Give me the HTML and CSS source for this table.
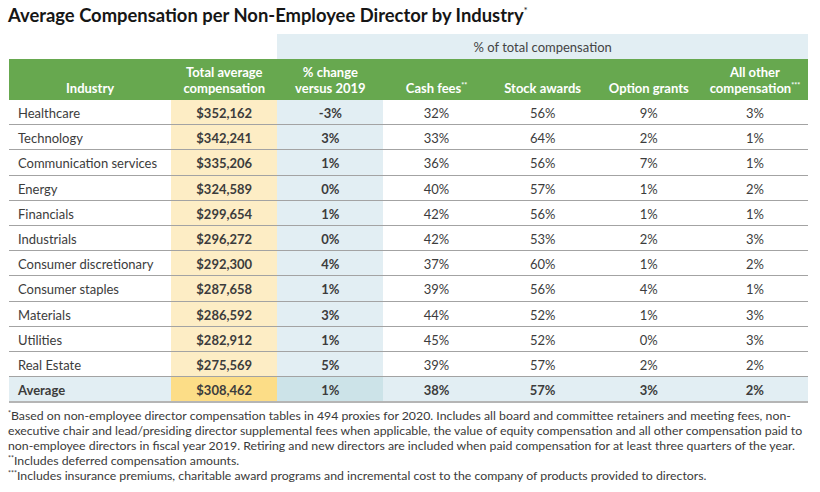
FILE: index.html
```html
<!DOCTYPE html>
<html>
<head>
<meta charset="utf-8">
<link rel="stylesheet" href="styles.css">
</head>
<body>
<h1 class="title">Average Compensation per Non-Employee Director by Industry<sup class="ast">*</sup></h1>
<table class="comp">
  <colgroup>
    <col class="c-ind"><col class="c-num"><col class="c-num"><col class="c-num"><col class="c-num"><col class="c-num"><col class="c-num">
  </colgroup>
  <thead>
    <tr class="band-row">
      <th colspan="2" class="blank"></th>
      <th colspan="5" class="band">% of total compensation</th>
    </tr>
    <tr class="head-row">
      <th>Industry</th>
      <th>Total average<br>compensation</th>
      <th>% change<br>versus 2019</th>
      <th>Cash fees<sup class="ast">**</sup></th>
      <th>Stock awards</th>
      <th>Option grants</th>
      <th>All other<br>compensation<sup class="ast">***</sup></th>
    </tr>
  </thead>
  <tbody>
    <tr><td class="ind">Healthcare</td><td class="tot">$352,162</td><td class="chg">-3%</td><td>32%</td><td>56%</td><td>9%</td><td>3%</td></tr>
    <tr><td class="ind">Technology</td><td class="tot">$342,241</td><td class="chg">3%</td><td>33%</td><td>64%</td><td>2%</td><td>1%</td></tr>
    <tr><td class="ind">Communication services</td><td class="tot">$335,206</td><td class="chg">1%</td><td>36%</td><td>56%</td><td>7%</td><td>1%</td></tr>
    <tr><td class="ind">Energy</td><td class="tot">$324,589</td><td class="chg">0%</td><td>40%</td><td>57%</td><td>1%</td><td>2%</td></tr>
    <tr><td class="ind">Financials</td><td class="tot">$299,654</td><td class="chg">1%</td><td>42%</td><td>56%</td><td>1%</td><td>1%</td></tr>
    <tr><td class="ind">Industrials</td><td class="tot">$296,272</td><td class="chg">0%</td><td>42%</td><td>53%</td><td>2%</td><td>3%</td></tr>
    <tr><td class="ind">Consumer discretionary</td><td class="tot">$292,300</td><td class="chg">4%</td><td>37%</td><td>60%</td><td>1%</td><td>2%</td></tr>
    <tr><td class="ind">Consumer staples</td><td class="tot">$287,658</td><td class="chg">1%</td><td>39%</td><td>56%</td><td>4%</td><td>1%</td></tr>
    <tr><td class="ind">Materials</td><td class="tot">$286,592</td><td class="chg">3%</td><td>44%</td><td>52%</td><td>1%</td><td>3%</td></tr>
    <tr><td class="ind">Utilities</td><td class="tot">$282,912</td><td class="chg">1%</td><td>45%</td><td>52%</td><td>0%</td><td>3%</td></tr>
    <tr><td class="ind">Real Estate</td><td class="tot">$275,569</td><td class="chg">5%</td><td>39%</td><td>57%</td><td>2%</td><td>2%</td></tr>
    <tr class="avg"><td class="ind">Average</td><td class="tot">$308,462</td><td class="chg">1%</td><td>38%</td><td>57%</td><td>3%</td><td>2%</td></tr>
  </tbody>
</table>
<div class="notes">
  <p><sup class="ast">*</sup>Based on non-employee director compensation tables in 494 proxies for 2020. Includes all board and committee retainers and meeting fees, non-executive chair and lead/presiding director supplemental fees when applicable, the value of equity compensation and all other compensation paid to non-employee directors in fiscal year 2019. Retiring and new directors are included when paid compensation for at least three quarters of the year.</p>
  <p><sup class="ast">**</sup>Includes deferred compensation amounts.</p>
  <p><sup class="ast">***</sup>Includes insurance premiums, charitable award programs and incremental cost to the company of products provided to directors.</p>
</div>
</body>
</html>
```

FILE: styles.css
```css
html, body {
  margin: 0;
  padding: 0;
  background: #ffffff;
}
body {
  padding: 4px 8px 0 8px;
  font-family: Lato, "Open Sans", "DejaVu Sans", sans-serif;
  color: #3a3a3a;
}
.title {
  margin: 0;
  font-size: 18.4px;
  line-height: 22px;
  font-weight: 700;
  color: #161616;
}
.title .ast {
  font-size: 10px;
  font-weight: 400;
  vertical-align: 8px;
  line-height: 0;
}
.ast {
  font-size: 8px;
  vertical-align: 5px;
  line-height: 0;
}
.comp {
  margin-top: 8px;
  margin-left: 1px;
  border-collapse: collapse;
  table-layout: fixed;
  width: 799px;
  font-size: 13px;
}
.c-ind { width: 162px; }
.c-num { width: 106px; }
.band-row th {
  height: 25px;
  padding: 0;
  font-weight: 400;
  font-size: 13px;
  color: #444;
}
.band-row .band {
  background: #e2eef3;
}
.head-row th {
  background: #67a84f;
  color: #ffffff;
  font-weight: 700;
  font-size: 13px;
  line-height: 16px;
  height: 37px;
  padding: 0 0 4px 0;
  vertical-align: bottom;
  text-align: center;
}
.head-row .ast {
  font-size: 7px;
  vertical-align: 5px;
}
tbody td {
  height: 22.2px;
  padding: 2px 0 0 0;
  text-align: center;
  border-bottom: 1px solid #a3a3a3;
  color: #3c3c3c;
}
tbody td.ind {
  text-align: left;
  padding-left: 9px;
}
tbody td.tot {
  background: #fdedc5;
  font-weight: 700;
}
tbody td.chg {
  background: #e2eef3;
  font-weight: 700;
}
tbody tr.avg td {
  background: #e2eef3;
  font-weight: 700;
  border-bottom: 2px solid #b5b5b5;
}
tbody tr.avg td.tot {
  background: #fcdd87;
}
tbody tr.avg td.chg {
  background: #cce3e8;
}
.notes {
  margin-top: 5px;
  font-size: 12.3px;
  line-height: 15px;
  color: #3a3a3a;
}
.notes p {
  margin: 0;
}
.notes .ast {
  font-size: 7px;
  vertical-align: 4px;
}
```
